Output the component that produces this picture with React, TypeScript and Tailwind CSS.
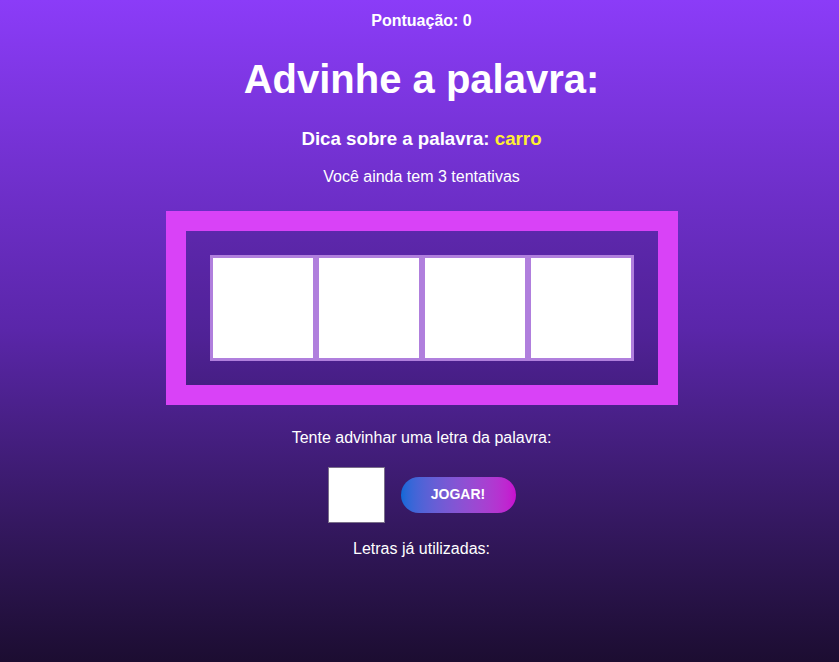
import React from "react";

export default function App() {
  const letters = [0, 1, 2, 3];
  return (
    <div
      className="min-h-screen w-full pl-[4px] bg-gradient-to-b from-[#8b3cf8] via-[#5a26a9] to-[#1c0d31] text-white flex flex-col items-center"
      style={{ fontFamily: '"Liberation Sans", Arial, sans-serif' }}
    >
      <p className="mt-[11.5px] text-[16px] leading-[18px] font-bold">Pontuação: 0</p>
      <h1 className="mt-[26px] text-[40px] leading-[46px] font-bold">Advinhe a palavra:</h1>
      <h3 className="mt-[26px] text-[18.72px] leading-[22px] font-bold">
        Dica sobre a palavra: <span className="text-[#ffee33]">carro</span>
      </h3>
      <p className="mt-[18.5px] text-[16px] leading-[18px]">Você ainda tem 3 tentativas</p>
      <div className="mt-[25px] w-[512px] h-[194px] border-[20px] border-[#d942f7]">
        <div className="h-full w-full bg-black/10 flex items-center justify-center">
          <div className="flex">
            {letters.map((i) => (
              <div key={i} className="w-[106px] h-[106px] border-[3px] border-[#b07fdd] bg-white" />
            ))}
          </div>
        </div>
      </div>
      <p className="mt-[24px] text-[16px] leading-[18px]">Tente advinhar uma letra da palavra:</p>
      <div className="mt-[19.5px] flex items-center gap-[16px]">
        <div className="w-[57px] h-[56px] bg-white border border-[#7a6f8a]" />
        <button className="w-[115px] h-[36px] rounded-full bg-gradient-to-r from-[#0b69d8] to-[#c80dcf] text-white font-bold text-[14px]">
          JOGAR!
        </button>
      </div>
      <p className="mt-[17.5px] text-[16px] leading-[18px]">Letras já utilizadas:</p>
    </div>
  );
}
